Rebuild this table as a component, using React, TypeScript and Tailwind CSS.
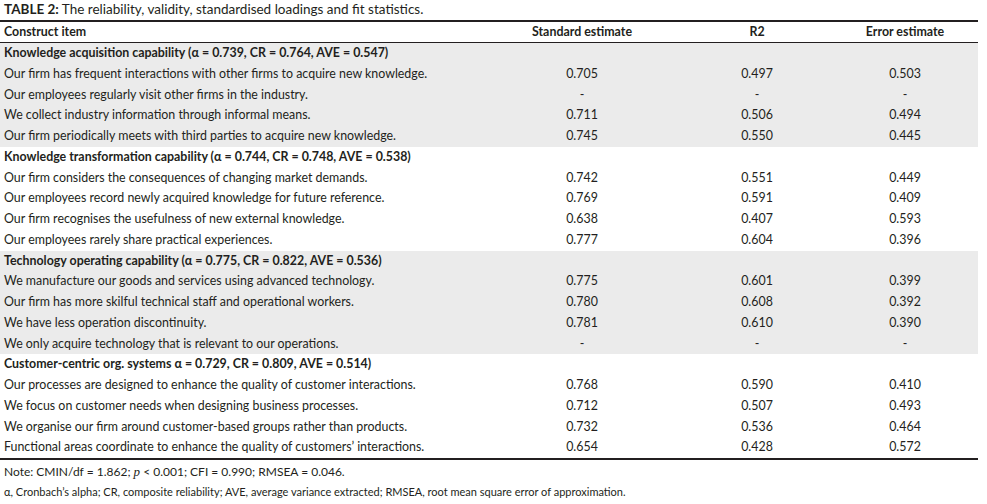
const groups = [
  {
    title: "Knowledge acquisition capability (α = 0.739, CR = 0.764, AVE = 0.547)",
    shaded: true,
    rows: [
      ["Our firm has frequent interactions with other firms to acquire new knowledge.", "0.705", "0.497", "0.503"],
      ["Our employees regularly visit other firms in the industry.", "-", "-", "-"],
      ["We collect industry information through informal means.", "0.711", "0.506", "0.494"],
      ["Our firm periodically meets with third parties to acquire new knowledge.", "0.745", "0.550", "0.445"],
    ],
  },
  {
    title: "Knowledge transformation capability (α = 0.744, CR = 0.748, AVE = 0.538)",
    shaded: false,
    rows: [
      ["Our firm considers the consequences of changing market demands.", "0.742", "0.551", "0.449"],
      ["Our employees record newly acquired knowledge for future reference.", "0.769", "0.591", "0.409"],
      ["Our firm recognises the usefulness of new external knowledge.", "0.638", "0.407", "0.593"],
      ["Our employees rarely share practical experiences.", "0.777", "0.604", "0.396"],
    ],
  },
  {
    title: "Technology operating capability (α = 0.775, CR = 0.822, AVE = 0.536)",
    shaded: true,
    rows: [
      ["We manufacture our goods and services using advanced technology.", "0.775", "0.601", "0.399"],
      ["Our firm has more skilful technical staff and operational workers.", "0.780", "0.608", "0.392"],
      ["We have less operation discontinuity.", "0.781", "0.610", "0.390"],
      ["We only acquire technology that is relevant to our operations.", "-", "-", "-"],
    ],
  },
  {
    title: "Customer-centric org. systems α = 0.729, CR = 0.809, AVE = 0.514)",
    shaded: false,
    rows: [
      ["Our processes are designed to enhance the quality of customer interactions.", "0.768", "0.590", "0.410"],
      ["We focus on customer needs when designing business processes.", "0.712", "0.507", "0.493"],
      ["We organise our firm around customer-based groups rather than products.", "0.732", "0.536", "0.464"],
      ["Functional areas coordinate to enhance the quality of customers’ interactions.", "0.654", "0.428", "0.572"],
    ],
  },
];

const rowCls = "grid grid-cols-[507px_150px_200px_96px] items-center h-[20.75px] pr-[25px]";

export default function App() {
  return (
    <div className="w-[987px] h-[504px] bg-white text-[#231f20] text-[12.4px] leading-none font-['Lato','Liberation_Sans',sans-serif] overflow-hidden">
      <div className="w-[978px]">
        {/* Caption */}
        <div className="h-[20px] pl-[4px] flex items-center text-[13.5px]">
          <span className="font-bold">TABLE 2:</span>
          <span>&nbsp;The reliability, validity, standardised loadings and fit statistics.</span>
        </div>

        {/* Header */}
        <div className="border-t-2 border-b border-[#231f20]">
          <div className={`${rowCls} h-[20px] font-bold`}>
            <div className="pl-[4px]">Construct item</div>
            <div className="text-center">Standard estimate</div>
            <div className="text-center">R2</div>
            <div className="text-center">Error estimate</div>
          </div>
        </div>

        {/* Body */}
        <div className="border-b-2 border-[#231f20]">
          {groups.map((g) => (
            <div key={g.title} className={g.shaded ? "bg-[#ebebeb]" : "bg-white"}>
              <div className={`${rowCls} font-bold`}>
                <div className="pl-[4px] whitespace-nowrap">{g.title}</div>
              </div>
              {g.rows.map((r) => (
                <div key={r[0]} className={rowCls}>
                  <div className="pl-[4px] whitespace-nowrap">{r[0]}</div>
                  <div className="text-center">{r[1]}</div>
                  <div className="text-center">{r[2]}</div>
                  <div className="text-center">{r[3]}</div>
                </div>
              ))}
            </div>
          ))}
        </div>
      </div>

      {/* Notes */}
      <div className="pl-[4px]">
        <div className="h-[21px] flex items-center pt-[2px] text-[12px]">
          Note: CMIN/df = 1.862;&nbsp;<span className="italic font-['Liberation_Serif',serif] text-[13px]">p</span>&nbsp;&lt; 0.001; CFI = 0.990; RMSEA = 0.046.
        </div>
        <div className="h-[21px] flex items-center text-[11px]">
          α, Cronbach’s alpha; CR, composite reliability; AVE, average variance extracted; RMSEA, root mean square error of approximation.
        </div>
      </div>
    </div>
  );
}
